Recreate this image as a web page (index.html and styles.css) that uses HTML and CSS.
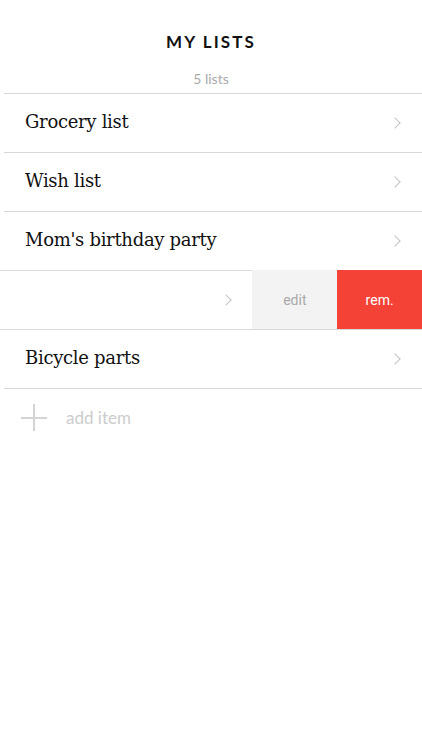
FILE: index.html
```html
<!DOCTYPE html>
<html lang="en">
<head>
  <meta charset="UTF-8">
  <meta name="viewport" content="width=device-width, initial-scale=1.0">
  <title>My Lists</title>
  <link rel="stylesheet" href="styles.css">
</head>
<body>
  <div class="screen">
    <header class="top">
      <h1 class="title">MY LISTS</h1>
      <div class="count">5 lists</div>
    </header>

    <ul class="lists">
      <li class="row">
        <span class="name">Grocery list</span>
        <span class="chev"></span>
      </li>
      <li class="row">
        <span class="name">Wish list</span>
        <span class="chev"></span>
      </li>
      <li class="row">
        <span class="name">Mom's birthday party</span>
        <span class="chev"></span>
      </li>
      <li class="row swiped">
        <div class="row-main">
          <span class="chev"></span>
        </div>
        <div class="act edit">edit</div>
        <div class="act rem">rem.</div>
      </li>
      <li class="row">
        <span class="name">Bicycle parts</span>
        <span class="chev"></span>
      </li>
    </ul>

    <div class="add">
      <span class="plus"></span>
      <span class="add-text">add item</span>
    </div>
  </div>
</body>
</html>
```

FILE: styles.css
```css
body {
  margin: 0;
  background: #fff;
  font-family: Lato, "Open Sans", sans-serif;
}

.screen {
  width: 422px;
  height: 750px;
  overflow: hidden;
}

.top {
  text-align: center;
  padding-top: 32px;
}

.title {
  margin: 0;
  font-size: 17px;
  font-weight: 700;
  letter-spacing: 2.1px;
  line-height: 20px;
  color: #111;
}

.count {
  margin-top: 18px;
  font-size: 14px;
  line-height: 18px;
  color: #aaa;
  padding-bottom: 5px;
}

.lists {
  list-style: none;
  margin: 0;
  padding: 0;
  border-top: 1px solid #d8d8d8;
  margin-left: 4px;
}

.row {
  height: 58px;
  border-bottom: 1px solid #d8d8d8;
  display: flex;
  align-items: center;
  padding: 0 21px 0 21px;
}

.name {
  flex: 1;
  margin-top: -4px;
  font-family: "DejaVu Serif", "Liberation Serif", serif;
  font-size: 18px;
  color: #111;
  letter-spacing: -0.3px;
}

.chev {
  width: 7px;
  height: 7px;
  border-top: 1.5px solid #c4c4c4;
  border-right: 1.5px solid #c4c4c4;
  transform: rotate(45deg);
  margin-right: 2px;
}

.swiped {
  padding: 0;
  margin-left: -4px;
  align-items: stretch;
  height: 59px;
  margin-top: -1px;
}

.row-main {
  width: 253px;
  display: flex;
  align-items: center;
  justify-content: flex-end;
  padding-right: 20px;
  border-top: 1px solid #d8d8d8;
  box-sizing: border-box;
}

.act {
  width: 85px;
  display: flex;
  align-items: center;
  justify-content: center;
  font-family: Roboto, "Open Sans", sans-serif;
  font-size: 14px;
}

.edit {
  background: #f3f3f3;
  color: #aaa;
}

.rem {
  background: #f44236;
  color: #fff;
}

.add {
  display: flex;
  align-items: center;
  padding: 15px 0 0 21px;
}

.plus {
  position: relative;
  width: 26px;
  height: 27px;
}

.plus::before,
.plus::after {
  content: "";
  position: absolute;
  background: #d4d4d4;
}

.plus::before {
  left: 12px;
  top: 0;
  width: 1.5px;
  height: 27px;
}

.plus::after {
  top: 13px;
  left: 0;
  width: 26px;
  height: 1.5px;
}

.add-text {
  margin-left: 19px;
  font-size: 17px;
  color: #ccc;
}
```
